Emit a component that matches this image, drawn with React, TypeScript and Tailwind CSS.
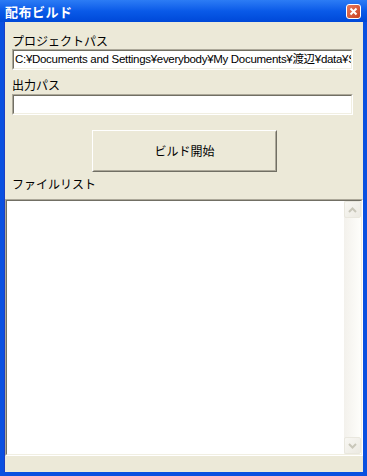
import React from 'react';

const font = { fontFamily: '"Noto Sans CJK JP", "Liberation Sans", sans-serif' };
const pathFont = { fontFamily: '"Liberation Sans", "Noto Sans CJK JP", sans-serif' };

const Sunken: React.FC<{ className?: string; children?: React.ReactNode }> = ({ className = '', children }) => (
  <div className={`border border-t-[#ACA899] border-l-[#ACA899] border-b-white border-r-white ${className}`}>
    <div className="h-full w-full border border-t-[#716F64] border-l-[#716F64] border-b-[#F1EFE2] border-r-[#F1EFE2] bg-white overflow-hidden">
      {children}
    </div>
  </div>
);

const ArrowButton: React.FC<{ up?: boolean }> = ({ up }) => (
  <div className="w-[17px] h-[17px] rounded-[2px] border border-[#E9E7DE] bg-gradient-to-br from-[#F8F7F3] to-[#ECEAE2] flex items-center justify-center">
    <svg width="9" height="6" viewBox="0 0 9 6">
      <path
        d={up ? 'M1 5 L4.5 1.5 L8 5' : 'M1 1 L4.5 4.5 L8 1'}
        fill="none"
        stroke="#C9C7BA"
        strokeWidth="2"
      />
    </svg>
  </div>
);

const App: React.FC = () => {
  return (
    <div className="w-[367px] h-[476px] flex flex-col bg-[#0A50E0] select-none" style={font}>
      {/* タイトルバー */}
      <div className="h-[22px] flex items-center justify-between pl-[5px] pr-[6px] bg-gradient-to-b from-[#2C7CF5] via-[#0A5AE8] to-[#0048D8]">
        <span className="text-white font-bold text-[13px] leading-none tracking-[0.5px]">配布ビルド</span>
        <div className="w-[15px] h-[15px] rounded-[3px] border border-white bg-gradient-to-br from-[#E8795C] to-[#C8401E] flex items-center justify-center">
          <svg width="9" height="9" viewBox="0 0 9 9">
            <path d="M1.5 1.5 L7.5 7.5 M7.5 1.5 L1.5 7.5" stroke="white" strokeWidth="2" />
          </svg>
        </div>
      </div>

      {/* 本体 */}
      <div className="flex-1 mx-[4px] mb-[4px] bg-[#ECE9D8] flex flex-col border-l border-[#1B3FC4]">
        <div className="mt-[12px] ml-[7px] h-[14px] text-[12px] leading-[14px] text-black">プロジェクトパス</div>
        <Sunken className="mt-[1px] ml-[7px] w-[341px] h-[21px]">
          <div className="pl-[1px] text-[11.5px] leading-[17px] tracking-[-0.3px] whitespace-nowrap text-black" style={pathFont}>
            C:¥Documents and Settings¥everybody¥My Documents¥渡辺¥data¥Sample
          </div>
        </Sunken>

        <div className="mt-[8px] ml-[7px] h-[14px] text-[12px] leading-[14px] text-black">出力パス</div>
        <Sunken className="mt-[2px] ml-[7px] w-[341px] h-[21px]" />

        <button className="mt-[15px] ml-[87px] w-[185px] h-[42px] border border-t-white border-l-white border-b-[#716F64] border-r-[#716F64] bg-[#ECE9D8] text-[12px] text-black">
          <div className="h-full w-full border border-t-[#ECE9D8] border-l-[#ECE9D8] border-b-[#ACA899] border-r-[#ACA899] flex items-center justify-center">
            ビルド開始
          </div>
        </button>

        <div className="mt-[5px] ml-[7px] h-[14px] text-[12px] leading-[14px] text-black">ファイルリスト</div>

        <Sunken className="mt-[8px] w-[358px] h-[257px]">
          <div className="h-full flex justify-end">
            <div className="w-[17px] h-full bg-gradient-to-r from-[#F3F1EC] to-[#FEFEFB] flex flex-col justify-between">
              <ArrowButton up />
              <ArrowButton />
            </div>
          </div>
        </Sunken>
      </div>
    </div>
  );
};

export default App;
